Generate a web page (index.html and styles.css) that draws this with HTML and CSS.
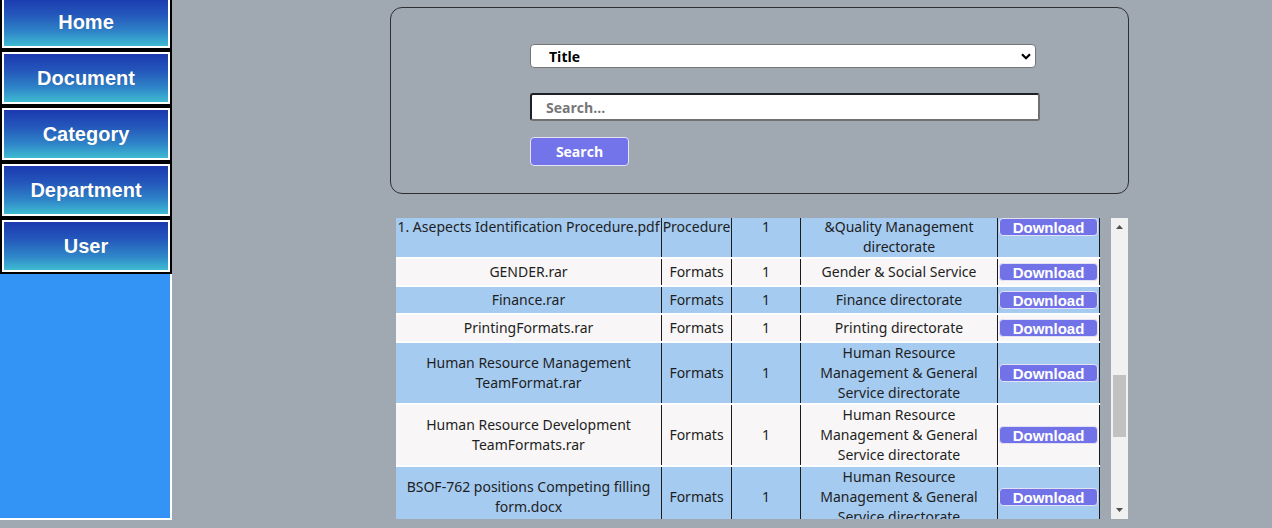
FILE: index.html
```html
<!DOCTYPE html>
<html lang="en">
<head>
<meta charset="utf-8">
<title>Documents</title>
<link rel="stylesheet" href="styles.css">
</head>
<body>
<div class="page">
  <aside class="sidebar">
    <nav class="nav">
      <a class="nav-btn" href="#">Home</a>
      <a class="nav-btn" href="#">Document</a>
      <a class="nav-btn" href="#">Category</a>
      <a class="nav-btn" href="#">Department</a>
      <a class="nav-btn" href="#">User</a>
    </nav>
    <div class="sidebar-fill"></div>
  </aside>
  <main class="main">
    <form class="search-box">
      <select class="field-select"><option>Title</option><option>Category</option><option>Department</option></select>
      <input class="field-input" type="text" placeholder="Search...">
      <button class="btn-search" type="button">Search</button>
    </form>
    <div class="results">
      <div class="table-view">
        <table class="doc-table">
          <colgroup>
            <col class="c-name"><col class="c-cat"><col class="c-ver"><col class="c-dept"><col class="c-act">
          </colgroup>
          <tbody>
            <tr class="row-blue">
              <td>1. Asepects Identification Procedure.pdf</td>
              <td>Procedure</td>
              <td>1</td>
              <td>Environment, Health, Safety &amp;Quality Management directorate</td>
              <td><button class="btn-dl" type="button">Download</button></td>
            </tr>
            <tr class="row-light">
              <td>GENDER.rar</td>
              <td>Formats</td>
              <td>1</td>
              <td>Gender &amp; Social Service</td>
              <td><button class="btn-dl" type="button">Download</button></td>
            </tr>
            <tr class="row-blue">
              <td>Finance.rar</td>
              <td>Formats</td>
              <td>1</td>
              <td>Finance directorate</td>
              <td><button class="btn-dl" type="button">Download</button></td>
            </tr>
            <tr class="row-light">
              <td>PrintingFormats.rar</td>
              <td>Formats</td>
              <td>1</td>
              <td>Printing directorate</td>
              <td><button class="btn-dl" type="button">Download</button></td>
            </tr>
            <tr class="row-blue">
              <td>Human Resource Management TeamFormat.rar</td>
              <td>Formats</td>
              <td>1</td>
              <td>Human Resource Management &amp; General Service directorate</td>
              <td><button class="btn-dl" type="button">Download</button></td>
            </tr>
            <tr class="row-light">
              <td>Human Resource Development TeamFormats.rar</td>
              <td>Formats</td>
              <td>1</td>
              <td>Human Resource Management &amp; General Service directorate</td>
              <td><button class="btn-dl" type="button">Download</button></td>
            </tr>
            <tr class="row-blue">
              <td>BSOF-762 positions Competing filling form.docx</td>
              <td>Formats</td>
              <td>1</td>
              <td>Human Resource Management &amp; General Service directorate</td>
              <td><button class="btn-dl" type="button">Download</button></td>
            </tr>
          </tbody>
        </table>
      </div>
      <div class="scrollbar">
        <span class="sb-arrow"><svg width="17" height="17" viewBox="0 0 17 17"><polygon points="5,11 8.5,7 12,11" fill="#505050"/></svg></span>
        <div class="sb-track"><div class="sb-thumb" style="margin-top:140px;height:62px"></div></div>
        <span class="sb-arrow"><svg width="17" height="17" viewBox="0 0 17 17"><polygon points="5,6 8.5,10 12,6" fill="#505050"/></svg></span>
      </div>
    </div>
  </main>
</div>
</body>
</html>
```
FILE: styles.css
```css
html, body {
  margin: 0;
  padding: 0;
}

body {
  background: #a0a8b2;
  font-family: "Noto Sans", "Open Sans", sans-serif;
  overflow: hidden;
}

.page {
  display: flex;
  align-items: flex-start;
}

/* Sidebar */
.sidebar {
  width: 172px;
  height: 526px;
  margin-top: -6px;
  display: flex;
  flex-direction: column;
  flex-shrink: 0;
}

.nav {
  display: flex;
  flex-direction: column;
}

.nav-btn {
  display: flex;
  align-items: center;
  justify-content: center;
  height: 56px;
  box-sizing: border-box;
  border: 2px solid #000;
  box-shadow: inset 0 0 0 2px #fff;
  background: linear-gradient(to bottom, #1a36ad 0%, #2456bb 35%, #2f86c8 70%, #41c3d3 100%);
  color: #fff;
  font-family: "Liberation Sans", Arial, sans-serif;
  font-weight: bold;
  font-size: 20px;
  text-decoration: none;
  text-shadow: 0 0 1px rgba(0, 0, 0, 0.25);
}

.sidebar-fill {
  flex: 1;
  background: #3494f6;
  border-right: 2px solid #fff;
  border-bottom: 2px solid #fff;
}

/* Main */
.main {
  padding: 7px 0 0 218px;
}

.search-box {
  width: 739px;
  height: 187px;
  box-sizing: border-box;
  border: 1px solid #2c2f33;
  border-radius: 12px;
  padding: 36px 0 0 139px;
  margin: 0;
  display: flex;
  flex-direction: column;
  align-items: flex-start;
}

.field-select {
  appearance: none;
  -webkit-appearance: none;
  width: 506px;
  height: 24px;
  box-sizing: border-box;
  margin: 0 0 25px 0;
  padding: 0 0 0 18px;
  background: #fff url("data:image/svg+xml;utf8,<svg xmlns='http://www.w3.org/2000/svg' width='10' height='7' viewBox='0 0 10 7'><path d='M1 1.2l4 4 4-4' fill='none' stroke='black' stroke-width='2.2'/></svg>") no-repeat right 4px center;
  border: 1px solid #767676;
  border-radius: 4px;
  color: #000;
  font-family: "Open Sans", "Noto Sans", sans-serif;
  font-weight: bold;
  font-size: 14px;
}

.field-input {
  width: 510px;
  height: 28px;
  box-sizing: border-box;
  margin: 0 0 16px 0;
  padding: 0 0 0 14px;
  background: #fff;
  border-width: 2px;
  border-style: solid;
  border-color: #1f2023 #707070 #707070 #1f2023;
  border-radius: 3px;
  font-family: "Open Sans", "Noto Sans", sans-serif;
  font-weight: bold;
  font-size: 14px;
  color: #000;
  outline: none;
}

.field-input::placeholder {
  color: #767676;
}

.btn-search {
  width: 99px;
  height: 29px;
  box-sizing: border-box;
  margin: 0;
  padding: 0;
  background: #7474ea;
  border: 1px solid #e4e4f4;
  border-radius: 4px;
  color: #fff;
  font-family: "Open Sans", "Noto Sans", sans-serif;
  font-weight: bold;
  font-size: 14px;
}

/* Results */
.results {
  display: flex;
  gap: 11px;
  margin: 24px 0 0 6px;
}

.table-view {
  width: 704px;
  height: 301px;
  overflow: hidden;
}

.doc-table {
  width: 704px;
  margin-top: -23px;
  table-layout: fixed;
  border-collapse: separate;
  border-spacing: 0 2px;
  background: #fff;
  color: #1e1e1e;
  font-size: 14px;
  line-height: 20px;
}

.c-name { width: 266px; }
.c-cat { width: 70px; }
.c-ver { width: 69px; }
.c-dept { width: 197px; }
.c-act { width: 102px; }

.doc-table td {
  padding: 0;
  text-align: center;
  vertical-align: middle;
  border-right: 1px solid #1c1c1c;
}

.row-blue td { background: #a5cbf1; }
.row-light td { background: #f8f6f6; }

.btn-dl {
  display: block;
  width: calc(100% - 2px);
  height: 18px;
  box-sizing: border-box;
  margin: 4px 0 4px 1px;
  padding: 0;
  background: #7272e8;
  border: 1px solid #e2e2f2;
  border-radius: 4px;
  color: #fff;
  font-family: "Liberation Sans", Arial, sans-serif;
  font-weight: bold;
  font-size: 15px;
  line-height: 15px;
}

/* Fake scrollbar (reflects scrolled state) */
.scrollbar {
  width: 17px;
  height: 301px;
  background: #f1f1f1;
  display: flex;
  flex-direction: column;
}

.sb-arrow {
  display: block;
  width: 17px;
  height: 17px;
}

.sb-arrow svg {
  display: block;
}

.sb-track {
  flex: 1;
  padding: 0 2px;
}

.sb-thumb {
  background: #c1c1c1;
}
```
